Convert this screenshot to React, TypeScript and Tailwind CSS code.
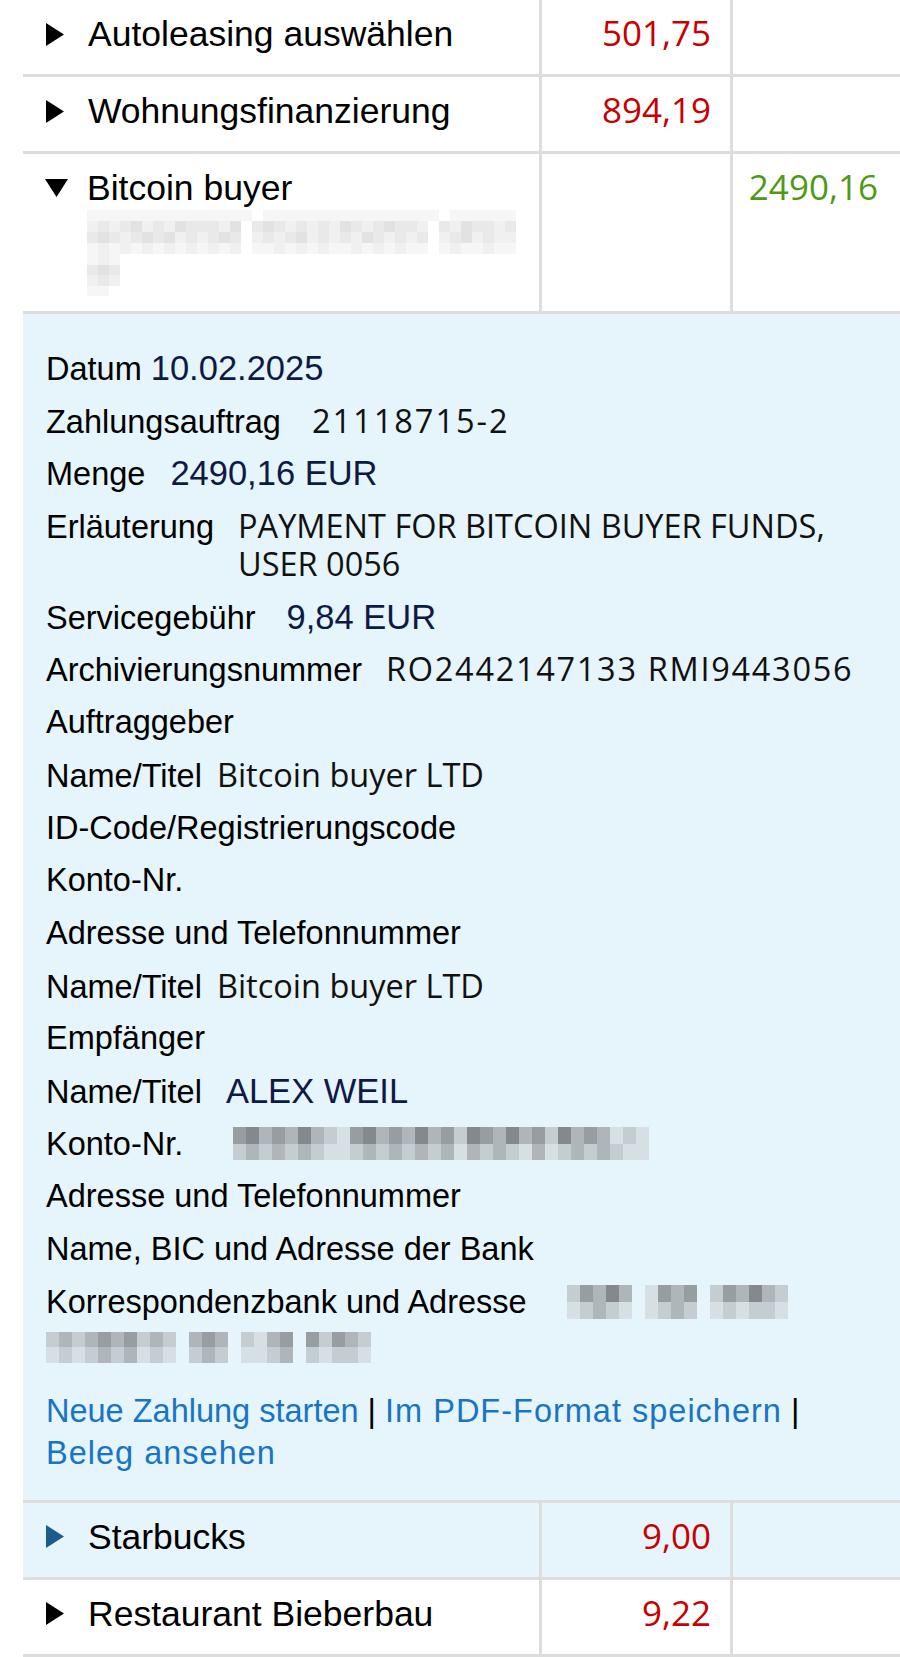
import React from "react";
import clsx from "clsx";

// shades for the pixelated (hidden) parts
const whiteShades = [
  "bg-transparent",
  "bg-[#f6f6f6]",
  "bg-[#f0f0f0]",
  "bg-[#e9e9e9]",
  "bg-[#e2e2e2]",
  "bg-[#dadada]",
];
const blueShades = [
  "bg-transparent",
  "bg-[#d6dfe4]",
  "bg-[#c4cdd2]",
  "bg-[#aeb6bb]",
  "bg-[#979ea2]",
  "bg-[#83898d]",
];

interface MosaicProps {
  rows: string[];
  shades: string[];
  cell: string;
  className?: string;
}

const Mosaic: React.FC<MosaicProps> = ({ rows, shades, cell, className }) => (
  <div className={clsx("flex flex-col", className)}>
    {rows.map((row, r) => (
      <div key={r} className="flex">
        {row.split("").map((ch, c) => (
          <div key={c} className={clsx(cell, shades[Number(ch)])} />
        ))}
      </div>
    ))}
  </div>
);

const RightArrow = ({ color = "#000" }: { color?: string }) => (
  <svg width="18" height="23" viewBox="0 0 18 23">
    <polygon points="0,0 18,11.5 0,23" fill={color} />
  </svg>
);

const DownArrow = () => (
  <svg width="23" height="18" viewBox="0 0 23 18">
    <polygon points="0,0 23,0 11.5,18" fill="#000" />
  </svg>
);

const label = "font-['Liberation_Sans',Arial,sans-serif]";
const open = "font-['Open_Sans',sans-serif]";

interface SummaryRowProps {
  name: string;
  debit?: string;
  active?: boolean;
}

const SummaryRow: React.FC<SummaryRowProps> = ({ name, debit, active }) => (
  <div
    className={clsx(
      "grid h-[77px] grid-cols-[516px_191px_1fr] border-b-[3px] border-[#dddddd]",
      active ? "bg-[#e6f4fb]" : "bg-white"
    )}
  >
    <div className="flex items-start pl-[23px] pt-[14px]">
      <div className="flex h-[40px] items-center">
        <RightArrow color={active ? "#1b5c8c" : "#000"} />
      </div>
      <span className={clsx(label, "ml-[24px] text-[35.5px] leading-[40px] text-black")}>
        {name}
      </span>
    </div>
    <div
      className={clsx(
        open,
        "border-l-[3px] border-[#dddddd] pr-[19px] pt-[13px] text-right text-[35px] leading-[40px] text-[#c80000]"
      )}
    >
      {debit}
    </div>
    <div className="border-l-[3px] border-[#dddddd]" />
  </div>
);

const BitcoinRow = () => (
  <div className="grid h-[160px] grid-cols-[516px_191px_1fr] border-b-[3px] border-[#dddddd] bg-white">
    <div className="flex items-start pl-[22px] pt-[14px]">
      <div className="flex h-[40px] items-center">
        <DownArrow />
      </div>
      <div className="ml-[19px] flex flex-col">
        <span className={clsx(label, "text-[35.5px] leading-[40px] text-black")}>
          Bitcoin buyer
        </span>
        <Mosaic
          className="mt-[2px]"
          shades={whiteShades}
          cell="h-[11px] w-[11px]"
          rows={[
            "111111111111111011111111111111110111111",
            "232342324333240343232324323433203243323",
            "343234342323430232342323243232302342322",
            "121212121212120112121211212121101211211",
          ]}
        />
        <Mosaic
          shades={whiteShades}
          cell="h-[10.5px] w-[11px]"
          rows={["1210", "3430", "2320", "1100"]}
        />
      </div>
    </div>
    <div className="border-l-[3px] border-[#dddddd]" />
    <div
      className={clsx(
        open,
        "border-l-[3px] border-[#dddddd] pr-[22px] pt-[13px] text-right text-[35px] leading-[40px] text-[#4e9a16]"
      )}
    >
      2490,16
    </div>
  </div>
);

type Detail = {
  label: string;
  value?: string;
  navy?: boolean;
  gap?: string;
  extra?: string;
  mosaic?: boolean;
  tall?: boolean;
};

const details: Detail[] = [
  { label: "Datum", value: "10.02.2025", navy: true, gap: "ml-[9px]" },
  { label: "Zahlungsauftrag", value: "21118715-2", gap: "ml-[31px]", extra: "tracking-[2px]" },
  { label: "Menge", value: "2490,16 EUR", navy: true, gap: "ml-[25px]" },
  {
    label: "Erläuterung",
    value: "PAYMENT FOR BITCOIN BUYER FUNDS, USER 0056",
    gap: "ml-[24px]",
    tall: true,
  },
  { label: "Servicegebühr", value: "9,84 EUR", navy: true, gap: "ml-[31px]" },
  {
    label: "Archivierungsnummer",
    value: "RO2442147133 RMI9443056",
    gap: "ml-[24px]",
    extra: "tracking-[1.7px]",
  },
  { label: "Auftraggeber" },
  { label: "Name/Titel", value: "Bitcoin buyer LTD", gap: "ml-[15px]" },
  { label: "ID-Code/Registrierungscode" },
  { label: "Konto-Nr." },
  { label: "Adresse und Telefonnummer" },
  { label: "Name/Titel", value: "Bitcoin buyer LTD", gap: "ml-[15px]" },
  { label: "Empfänger" },
  { label: "Name/Titel", value: "ALEX WEIL", navy: true, gap: "ml-[24px]" },
  { label: "Konto-Nr.", mosaic: true },
  { label: "Adresse und Telefonnummer" },
  { label: "Name, BIC und Adresse der Bank" },
];

const DetailPanel = () => (
  <div className="border-b-[3px] border-[#dddddd] bg-[#e6f4fb] pb-[26px] pl-[23px] pr-[23px] pt-[35px]">
    <div className="flex flex-col gap-[14.7px]">
      {details.map((d, i) => (
        <div
          key={i}
          className={clsx("flex items-baseline leading-[38px]", d.tall ? "h-[76px]" : "h-[38px]")}
        >
          <span className={clsx(label, "shrink-0 text-[32.5px] text-black")}>{d.label}</span>
          {d.value && (
            <span
              className={clsx(
                d.gap,
                d.extra,
                "min-w-0",
                d.navy
                  ? clsx(label, "text-[34.5px] text-[#0f1a44]")
                  : clsx(open, "text-[32.5px] text-[#111111]")
              )}
            >
              {d.value}
            </span>
          )}
          {d.mosaic && (
            <Mosaic
              className="ml-[50px] self-center"
              shades={blueShades}
              cell="h-[16.5px] w-[13px]"
              rows={[
                "45343532145343534254353425343121",
                "23232321123232323132321312323211",
              ]}
            />
          )}
        </div>
      ))}
      <div className="flex flex-col">
        <div className="flex h-[38px] items-center">
          <span className={clsx(label, "text-[32.5px] leading-[38px] text-black")}>
            Korrespondenzbank und Adresse
          </span>
          <Mosaic
            className="ml-[40px]"
            shades={blueShades}
            cell="h-[17px] w-[13px]"
            rows={["24353014340243532", "12321012320121221"]}
          />
        </div>
        <Mosaic
          className="mt-[11px]"
          shades={blueShades}
          cell="h-[15.5px] w-[13px]"
          rows={["2323434232034302134042432", "1212323121023201123021221"]}
        />
      </div>
    </div>
    <p className={clsx(label, "mt-[27px] text-[32.5px] leading-[42px] text-black")}>
      <span className="whitespace-nowrap text-[#1874c6]">Neue Zahlung starten</span> |{" "}
      <span className="whitespace-nowrap tracking-[1px] text-[#1874c6]">
        Im PDF-Format speichern
      </span>{" "}
      |{" "}
      <span className="inline-block whitespace-nowrap tracking-[1px] text-[#1874c6]">
        Beleg ansehen
      </span>
    </p>
  </div>
);

const App = () => {
  return (
    <div className="min-h-[1657px] w-[900px] bg-white pl-[23px]">
      <div className="border-t border-[#eeeeee]">
        <div className="-mt-px">
          <SummaryRow name="Autoleasing auswählen" debit="501,75" />
        </div>
        <SummaryRow name="Wohnungsfinanzierung" debit="894,19" />
        <BitcoinRow />
        <DetailPanel />
        <SummaryRow name="Starbucks" debit="9,00" active />
        <SummaryRow name="Restaurant Bieberbau" debit="9,22" />
      </div>
    </div>
  );
};

export default App;
